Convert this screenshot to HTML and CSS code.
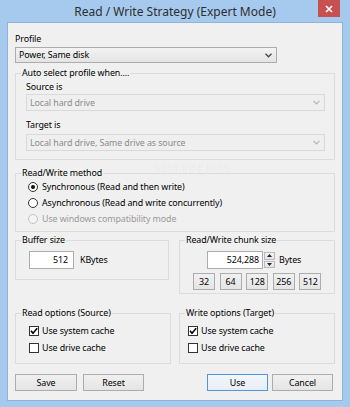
FILE: index.html
```html
<!DOCTYPE html>
<html>
<head>
<meta charset="utf-8">
<link rel="stylesheet" href="styles.css">
</head>
<body>
<div class="window">
  <div class="titlebar">
    <div class="title">Read / Write Strategy (Expert Mode)</div>
    <div class="close"><svg width="8" height="8" viewBox="0 0 8 8"><path d="M1 1L7 7M7 1L1 7" stroke="#fff" stroke-width="1.6"/></svg></div>
  </div>
  <div class="content">
    <div class="label">Profile</div>
    <div class="combo profile"><span>Power, Same disk</span><svg class="chev" width="7" height="5" viewBox="0 0 7 5"><path d="M0.5 0.8L3.5 3.8L6.5 0.8" fill="none" stroke="#444" stroke-width="1.3"/></svg></div>

    <fieldset class="group auto">
      <legend>Auto select profile when....</legend>
      <div class="sub">Source is</div>
      <div class="combo disabled"><span>Local hard drive</span><svg class="chev" width="7" height="5" viewBox="0 0 7 5"><path d="M0.5 0.8L3.5 3.8L6.5 0.8" fill="none" stroke="#b5b5b5" stroke-width="1.2"/></svg></div>
      <div class="sub second">Target is</div>
      <div class="combo disabled second"><span>Local hard drive, Same drive as source</span><svg class="chev" width="7" height="5" viewBox="0 0 7 5"><path d="M0.5 0.8L3.5 3.8L6.5 0.8" fill="none" stroke="#b5b5b5" stroke-width="1.2"/></svg></div>
    </fieldset>

    <fieldset class="group method">
      <legend>Read/Write method</legend>
      <div class="radio"><span class="dot on"></span><span>Synchronous (Read and then write)</span></div>
      <div class="radio"><span class="dot"></span><span>Asynchronous (Read and write concurrently)</span></div>
      <div class="radio off"><span class="dot"></span><span>Use windows compatibility mode</span></div>
    </fieldset>

    <div class="row sizes">
      <fieldset class="group buffer">
        <legend>Buffer size</legend>
        <div class="inrow">
          <div class="field w45">512</div>
          <span class="unit">KBytes</span>
        </div>
      </fieldset>
      <fieldset class="group chunk">
        <legend>Read/Write chunk size</legend>
        <div class="inrow chunkrow">
          <div class="field w56">524,288</div>
          <div class="spin">
            <div class="sbtn"><svg width="5" height="3" viewBox="0 0 5 3"><path d="M0 3L2.5 0L5 3Z" fill="#222"/></svg></div>
            <div class="sbtn"><svg width="5" height="3" viewBox="0 0 5 3"><path d="M0 0L2.5 3L5 0Z" fill="#222"/></svg></div>
          </div>
          <span class="unit">Bytes</span>
        </div>
        <div class="sizebtns">
          <div class="btn small">32</div>
          <div class="btn small">64</div>
          <div class="btn small">128</div>
          <div class="btn small">256</div>
          <div class="btn small">512</div>
        </div>
      </fieldset>
    </div>

    <div class="row options">
      <fieldset class="group readopt">
        <legend>Read options (Source)</legend>
        <div class="check"><span class="box"><svg width="10" height="10" viewBox="0 0 10 10"><path d="M2 4.8L4 7.2L8.2 2.2" fill="none" stroke="#000" stroke-width="1.6"/></svg></span><span>Use system cache</span></div>
        <div class="check"><span class="box"></span><span>Use drive cache</span></div>
      </fieldset>
      <fieldset class="group writeopt">
        <legend>Write options (Target)</legend>
        <div class="check"><span class="box"><svg width="10" height="10" viewBox="0 0 10 10"><path d="M2 4.8L4 7.2L8.2 2.2" fill="none" stroke="#000" stroke-width="1.6"/></svg></span><span>Use system cache</span></div>
        <div class="check"><span class="box"></span><span>Use drive cache</span></div>
      </fieldset>
    </div>

    <div class="actions">
      <div class="btn act save">Save</div>
      <div class="btn act reset">Reset</div>
      <div class="spacer"></div>
      <div class="btn act default">Use</div>
      <div class="btn act cancel">Cancel</div>
    </div>

    <div class="watermark">SOFTPEDIA</div>
  </div>
</div>
</body>
</html>
```

FILE: styles.css
```css
* { box-sizing: border-box; }
body {
  margin: 0;
  width: 350px;
  height: 407px;
  overflow: hidden;
  font-family: "Noto Sans", "Open Sans", sans-serif;
  font-size: 8.9px;
  letter-spacing: -0.1px;
  line-height: 12px;
  color: #000;
}
.window {
  width: 350px;
  height: 407px;
  background: #a6c9ee;
  padding: 0 7px 6px 7px;
  display: flex;
  flex-direction: column;
}
.titlebar {
  height: 22px;
  flex: none;
  display: grid;
  grid-template-columns: 1fr auto 1fr;
  align-items: start;
}
.title {
  grid-column: 2;
  font-size: 12px;
  letter-spacing: 0;
  line-height: 24px;
  color: #2e2e2e;
  white-space: nowrap;
}
.close {
  grid-column: 3;
  justify-self: end;
  width: 22px;
  height: 17px;
  margin-right: 3px;
  background: #c75050;
  display: flex;
  align-items: center;
  justify-content: center;
}
.content {
  flex: 1;
  background: #f0f0f0;
  border: 1px solid #8fb2d6;
  padding: 10px 7px 0 7px;
  position: relative;
}
.label { height: 12px; }
.combo {
  display: flex;
  align-items: center;
  justify-content: space-between;
  border: 1px solid #acacac;
  background: linear-gradient(#f3f3f3, #e4e4e4);
  padding: 0 4px 0 3px;
  white-space: nowrap;
}
.combo.profile { width: 262px; height: 16px; margin-top: 2px; }
.combo.disabled {
  height: 17px;
  margin-top: 1px;
  border-color: #d9d9d9;
  background: #efefef;
  color: #8b8b8b;
}
.combo.disabled.second { margin-top: 3px; }
.chev { flex: none; }

fieldset.group {
  margin: 0;
  min-width: 0;
  border: 1px solid #dcdcdc;
  padding: 0 9px 8px 10px;
}
fieldset.group legend {
  padding: 0 1px;
  margin-left: -5px;
  line-height: 12px;
}
fieldset.auto { margin-top: 4px; }
.sub { height: 12px; margin-top: 2px; }
.sub.second { margin-top: 8px; }

fieldset.method { margin-top: 7px; padding: 0 9px 4px 12px; }
fieldset.method legend { margin-left: -7px; }
.radio {
  height: 16px;
  display: flex;
  align-items: center;
  gap: 4px;
  white-space: nowrap;
}
.dot {
  width: 10px;
  height: 10px;
  border-radius: 50%;
  border: 1px solid #333;
  background: #fff;
  display: flex;
  align-items: center;
  justify-content: center;
  flex: none;
}
.dot.on::after {
  content: "";
  width: 4px;
  height: 4px;
  border-radius: 50%;
  background: #111;
}
.radio.off { color: #9a9a9a; }
.radio.off .dot { border-color: #c4c4c4; background: #f4f4f4; }

.row {
  display: flex;
  justify-content: space-between;
  align-items: flex-start;
}
.sizes { margin-top: 2px; }
fieldset.buffer { width: 154px; padding: 0 0 10px 13px; }
fieldset.buffer legend { margin-left: -8px; }
fieldset.chunk { width: 156px; padding: 0 0 3px 13px; }
fieldset.chunk legend { margin-left: -8px; }
.inrow {
  display: flex;
  align-items: center;
  margin-top: 5px;
}
.chunkrow { margin-left: 14px; }
.field {
  height: 18px;
  background: #fff;
  border: 1px solid #abadb3;
  text-align: right;
  padding-right: 5px;
  line-height: 16px;
}
.w45 { width: 45px; }
.w56 { width: 56px; padding-right: 3px; }
.unit { margin-left: 6px; }
.chunkrow .unit { margin-left: 4px; }
.spin {
  width: 11px;
  height: 16px;
  margin-left: 1px;
  display: flex;
  flex-direction: column;
  gap: 1px;
}
.sbtn {
  flex: 1;
  border: 1px solid #b9b9b9;
  background: linear-gradient(#f4f4f4, #e4e4e4);
  display: flex;
  align-items: center;
  justify-content: center;
}
.sizebtns {
  display: flex;
  gap: 4.6px;
  margin-top: 4px;
}
.btn {
  height: 17px;
  border: 1px solid #acacac;
  background: linear-gradient(#f0f0f0, #e5e5e5);
  display: flex;
  align-items: center;
  justify-content: center;
  white-space: nowrap;
}
.btn.small { width: 22px; }

.options { margin-top: 13px; }
fieldset.readopt { width: 156px; padding: 3px 0 7px 13px; }
fieldset.readopt legend { margin-left: -8px; }
fieldset.writeopt { width: 156px; padding: 3px 0 7px 8px; }
fieldset.writeopt legend { margin-left: -3px; }
.check {
  height: 17px;
  display: flex;
  align-items: center;
  gap: 3px;
  white-space: nowrap;
}
.box {
  width: 10px;
  height: 10px;
  border: 1px solid #333;
  background: #fff;
  flex: none;
  display: flex;
  align-items: center;
  justify-content: center;
}
.box svg { flex: none; }

.actions {
  display: flex;
  margin-top: 10px;
  padding-right: 2px;
}
.act { width: 61px; }
.save { width: 62px; }
.reset { margin-left: 6px; }
.spacer { flex: 1; }
.cancel { margin-left: 4px; }
.btn.default {
  border-color: #4f97d9;
  background: linear-gradient(#f3f7fb, #e7eef6);
}
.watermark {
  position: absolute;
  left: 146px;
  top: 139px;
  font-size: 13px;
  line-height: 12px;
  letter-spacing: 1px;
  color: rgba(255, 255, 255, 0.7);
  text-shadow: 0 0 1px rgba(0, 0, 0, 0.12);
  pointer-events: none;
}
```
